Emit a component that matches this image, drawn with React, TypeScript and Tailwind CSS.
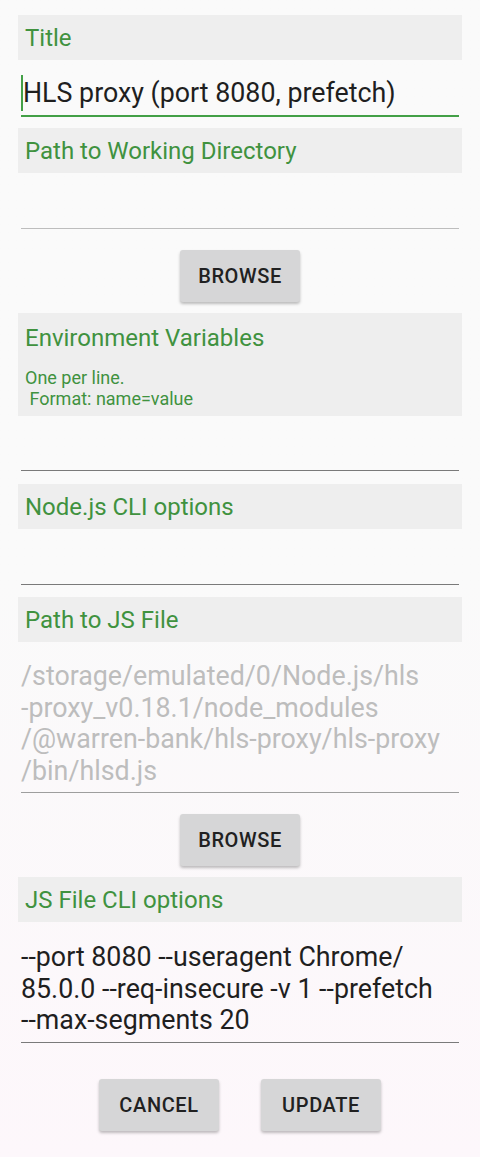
export default function App() {
  const green = 'text-[#40923f]';

  const Label = ({ text }: { text: string }) => (
    <div className={`h-[45px] bg-[#eeeeee] flex items-center pl-[7px] text-[24px] leading-[28px] ${green}`}>
      {text}
    </div>
  );

  const Button = ({ text }: { text: string }) => (
    <button className="w-[120px] h-[52px] bg-[#d6d6d7] rounded-[3px] shadow-[0_2px_3px_rgba(0,0,0,0.25)] text-[20px] font-medium tracking-[0.6px] text-[#212121]">
      {text}
    </button>
  );

  return (
    <div
      className="min-h-[1157px] w-[480px] bg-gradient-to-b from-[#fafafa] via-[#fafafa] to-[#fdf7fb] px-[18px] pt-[15px]"
      style={{ fontFamily: 'Roboto, "Noto Sans", sans-serif' }}
    >
      <Label text="Title" />
      <div className="mx-[3px] h-[57px] pt-[15px] border-b-2 border-[#43a047] flex items-start">
        <span className="inline-block w-[2px] h-[36px] bg-[#43a047]" />
        <span className="text-[26.8px] leading-[31.5px] text-[#1f1f1f] mt-[3px]">HLS proxy (port 8080, prefetch)</span>
      </div>

      <div className="mt-[11px]">
        <Label text="Path to Working Directory" />
      </div>
      <div className="mx-[3px] h-[56px] border-b border-[#bdbdbd]" />

      <div className="flex justify-center pt-[21px] pb-[11px]">
        <Button text="BROWSE" />
      </div>

      <div className={`bg-[#eeeeee] pl-[7px] pt-[11px] pb-[7px] ${green}`}>
        <div className="text-[24px] leading-[28px]">Environment Variables</div>
        <div className="mt-[15px] text-[18px] leading-[21px] whitespace-pre">
          {'One per line.\n Format: name=value'}
        </div>
      </div>
      <div className="mx-[3px] h-[55px] border-b border-[#7a7a7a]" />

      <div className="mt-[13px]">
        <Label text="Node.js CLI options" />
      </div>
      <div className="mx-[3px] h-[56px] border-b border-[#7a7a7a]" />

      <div className="mt-[12px]">
        <Label text="Path to JS File" />
      </div>
      <div className="mx-[3px] pt-[19px] pb-[5px] border-b border-[#9e9e9e] text-[26.8px] leading-[31.5px] text-[#bdbdbd]">
        /storage/emulated/0/Node.js/hls
        <br />
        -proxy_v0.18.1/node_modules
        <br />
        /@warren-bank/hls-proxy/hls-proxy
        <br />
        /bin/hlsd.js
      </div>

      <div className="flex justify-center pt-[21px] pb-[11px]">
        <Button text="BROWSE" />
      </div>

      <Label text="JS File CLI options" />
      <div className="mx-[3px] pt-[20px] pb-[5px] border-b border-[#7a7a7a] text-[26.8px] leading-[31.5px] text-[#1f1f1f]">
        --port 8080 --useragent Chrome/
        <br />
        85.0.0 --req-insecure -v 1 --prefetch
        <br />
        --max-segments 20
      </div>

      <div className="flex justify-center gap-[42px] pt-[36px]">
        <Button text="CANCEL" />
        <Button text="UPDATE" />
      </div>
    </div>
  );
}
